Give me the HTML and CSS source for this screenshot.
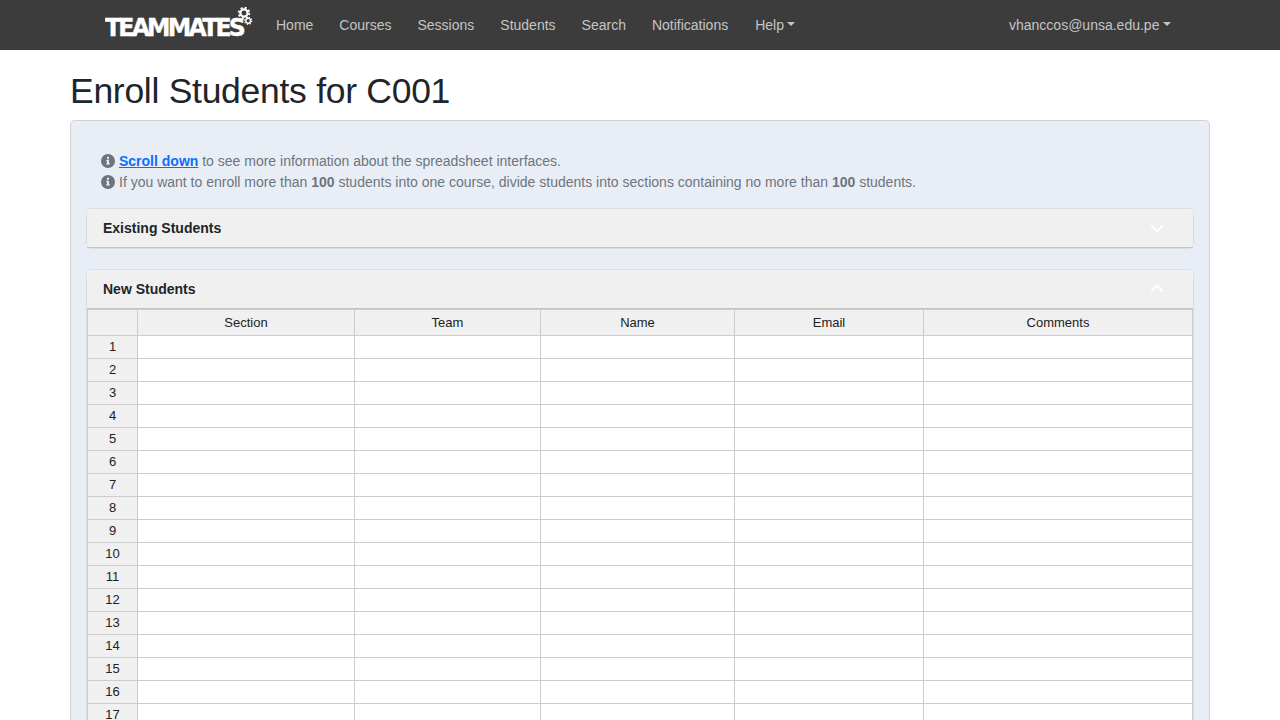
FILE: index.html
```html
<!DOCTYPE html>
<html lang="en">
<head>
<meta charset="utf-8">
<title>Enroll Students</title>
<link rel="stylesheet" href="styles.css">
</head>
<body>
<nav class="navbar">
  <a class="brand">
    <svg width="150" height="50" viewBox="0 0 150 50">
      <text class="logo-text" x="0" y="36" textLength="138" lengthAdjust="spacingAndGlyphs">TEAMMATES</text>
      <g class="gear">
        <circle cx="139" cy="13" r="3.600" stroke-width="2.200"/>
        <circle cx="139" cy="13" r="5.300" stroke-width="1.800" stroke-dasharray="2.080 2.080"/>
        <circle cx="143.200" cy="20.800" r="2.400" stroke-width="1.400"/>
        <circle cx="143.200" cy="20.800" r="3.500" stroke-width="1.300" stroke-dasharray="1.370 1.370"/>
      </g>
    </svg>
  </a>
  <div class="links">
    <a>Home</a><a>Courses</a><a>Sessions</a><a>Students</a><a>Search</a><a>Notifications</a><a class="caret help">Help</a>
  </div>
  <a class="caret account">vhanccos@unsa.edu.pe</a>
</nav>
<main class="container">
  <h1>Enroll Students for C001</h1>
  <section class="panel">
    <div class="info">
      <div class="info-line"><svg class="info-icon" viewBox="0 0 14 14"><circle cx="7" cy="7" r="7"/><path d="M6 2.700h2v2H6zM5.300 5.800H8v3.400h.8v1.400H5.200V9.200H6v-2h-.7z"/></svg><span><a class="scroll">Scroll down</a> to see more information about the spreadsheet interfaces.</span></div>
      <div class="info-line"><svg class="info-icon" viewBox="0 0 14 14"><circle cx="7" cy="7" r="7"/><path d="M6 2.700h2v2H6zM5.300 5.800H8v3.400h.8v1.400H5.200V9.200H6v-2h-.7z"/></svg><span>If you want to enroll more than <b>100</b> students into one course, divide students into sections containing no more than <b>100</b> students.</span></div>
    </div>
    <div class="card">
      <div class="card-header">Existing Students<svg class="chevron" viewBox="0 0 14 14"><path d="M1.100 4.500 7 10.300l5.900-5.800"/></svg></div>
    </div>
    <div class="card">
      <div class="card-header">New Students<svg class="chevron" viewBox="0 0 14 14"><path d="M1.100 9.500 7 3.700l5.900 5.800"/></svg></div>
      <table class="sheet">
        <colgroup><col class="c-num"><col class="c-section"><col class="c-team"><col class="c-name"><col class="c-email"><col class="c-comments"></colgroup>
        <thead><tr><th></th><th>Section</th><th>Team</th><th>Name</th><th>Email</th><th>Comments</th></tr></thead>
        <tbody>
          <tr><th>1</th><td></td><td></td><td></td><td></td><td></td></tr>
          <tr><th>2</th><td></td><td></td><td></td><td></td><td></td></tr>
          <tr><th>3</th><td></td><td></td><td></td><td></td><td></td></tr>
          <tr><th>4</th><td></td><td></td><td></td><td></td><td></td></tr>
          <tr><th>5</th><td></td><td></td><td></td><td></td><td></td></tr>
          <tr><th>6</th><td></td><td></td><td></td><td></td><td></td></tr>
          <tr><th>7</th><td></td><td></td><td></td><td></td><td></td></tr>
          <tr><th>8</th><td></td><td></td><td></td><td></td><td></td></tr>
          <tr><th>9</th><td></td><td></td><td></td><td></td><td></td></tr>
          <tr><th>10</th><td></td><td></td><td></td><td></td><td></td></tr>
          <tr><th>11</th><td></td><td></td><td></td><td></td><td></td></tr>
          <tr><th>12</th><td></td><td></td><td></td><td></td><td></td></tr>
          <tr><th>13</th><td></td><td></td><td></td><td></td><td></td></tr>
          <tr><th>14</th><td></td><td></td><td></td><td></td><td></td></tr>
          <tr><th>15</th><td></td><td></td><td></td><td></td><td></td></tr>
          <tr><th>16</th><td></td><td></td><td></td><td></td><td></td></tr>
          <tr><th>17</th><td></td><td></td><td></td><td></td><td></td></tr>
        </tbody>
      </table>
    </div>
  </section>
</main>
</body>
</html>
```
FILE: styles.css
```css
* { box-sizing: border-box; }
html, body { height: 720px; overflow: hidden; }
body {
  margin: 0;
  background: #fff;
  color: #212529;
  font: 14px/21px "Liberation Sans", Arial, sans-serif;
}
.navbar {
  display: flex;
  align-items: center;
  height: 50px;
  padding: 0 109px 0 105px;
  background: #3c3c3c;
  color: #c4c4c4;
}
.brand { display: flex; width: 158px; height: 50px; }
.logo-text {
  font: bold 24.5px "DejaVu Sans", sans-serif;
  letter-spacing: -2.9px;
  fill: #fff;
  stroke: #fff;
  stroke-width: 0.4px;
}
.gear circle { fill: none; stroke: #fff; }
.links { display: flex; }
.links a { padding: 0 13px; }
.links .help { padding-left: 14px; }
.caret::after {
  content: "";
  display: inline-block;
  margin-left: 3.570px;
  vertical-align: 3.570px;
  border-top: 4.200px solid;
  border-right: 4.200px solid transparent;
  border-left: 4.200px solid transparent;
}
.links .help::after { margin-left: 2.6px; }
.account { margin-left: auto; }
.container { width: 1140px; margin: 0 auto; }
h1 {
  margin: 0;
  padding: 20px 0 8px;
  font-size: 35.5px;
  line-height: 42px;
  font-weight: 400;
  letter-spacing: -0.28px;
}
.panel {
  height: 600px;
  padding: 15px 15px 0;
  border: 1px solid #d0d2d6;
  border-bottom: 0;
  border-radius: 5px 5px 0 0;
  background: #e9eef6;
}
.info { padding: 14px 15px; color: #6c757d; height: 72px; }
.info-line { display: flex; align-items: center; gap: 4px; height: 21px; white-space: nowrap; }
.info-line span { padding-top: 2px; }
.info-icon { width: 14px; height: 14px; fill: #6c757d; }
.info-icon path { fill: #e9eef6; }
.scroll { color: #0d6efd; font-weight: 700; text-decoration: underline; }
.card {
  margin-bottom: 20px;
  border: 1px solid #dcdddf;
  border-radius: 5px;
  background: #fff;
}
.card-header {
  display: flex;
  align-items: center;
  justify-content: space-between;
  height: 39px;
  padding: 0 29px 0 16px;
  border-bottom: 1px solid #c4c4c4;
  border-radius: 4px 4px 0 0;
  background: #f0f0f0;
  font-weight: 700;
}
.chevron { width: 14px; height: 14px; fill: none; stroke: #fff; stroke-width: 2; }
.sheet {
  width: 1106px;
  table-layout: fixed;
  border-collapse: separate;
  border-spacing: 0;
  border-top: 1px solid #ccc;
  border-left: 1px solid #ccc;
  font-size: 13px;
}
.sheet th, .sheet td {
  height: 23px;
  padding: 0;
  border-right: 1px solid #ccc;
  border-bottom: 1px solid #ccc;
  line-height: 20px;
}
.sheet th { background: #f0f0f0; color: #222; font-weight: 400; text-align: center; }
.sheet tbody th { padding-bottom: 1px; }
.sheet thead th { height: 26px; }
.c-num { width: 50px; }
.c-section { width: 217px; }
.c-team { width: 186px; }
.c-name { width: 194px; }
.c-email { width: 189px; }
.c-comments { width: 269px; }
```
